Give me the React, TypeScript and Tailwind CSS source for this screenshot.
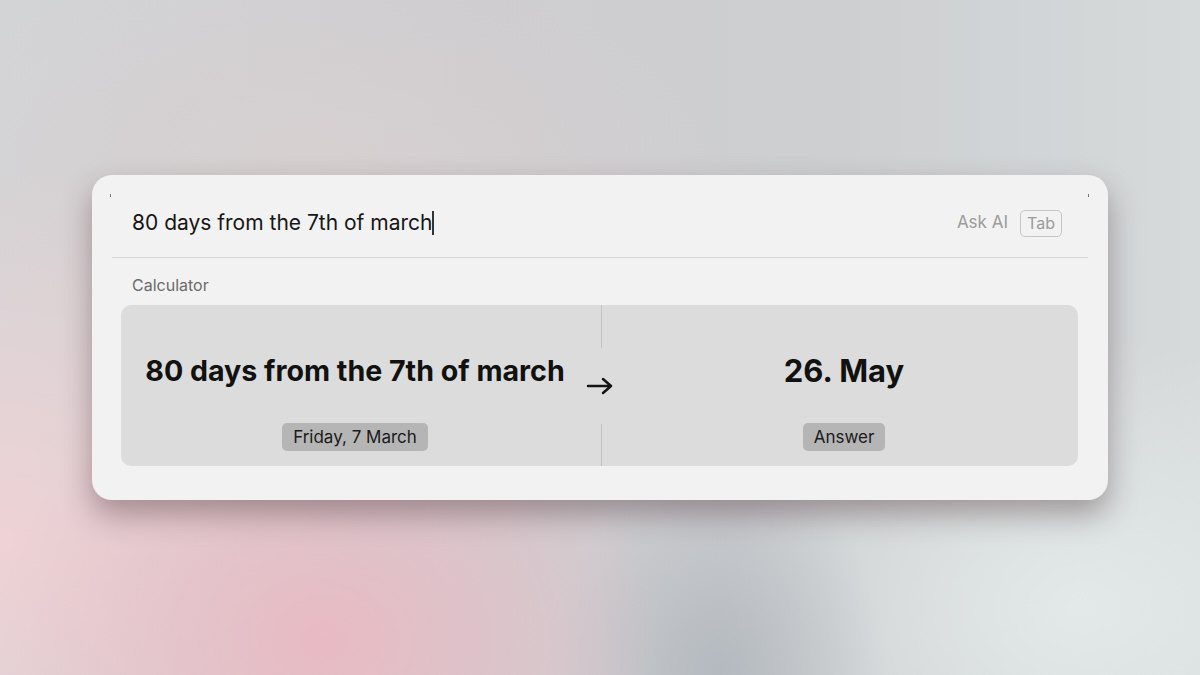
import React from 'react';

function Badge({ children }: { children: React.ReactNode }) {
  return (
    <span className="rounded-[5px] bg-[#b5b5b5] px-[11px] h-[28px] flex items-center text-[17px] leading-none text-[#1a1a1a]">
      {children}
    </span>
  );
}

export default function App() {
  return (
    <main
      className="w-[1200px] h-[675px] flex items-center justify-center overflow-hidden font-['Inter',_'Liberation_Sans',_sans-serif] bg-[#d0d0d2] bg-[radial-gradient(ellipse_28%_42%_at_27%_95%,_rgba(233,186,195,1),_transparent),radial-gradient(ellipse_30%_55%_at_0%_80%,_rgba(240,210,213,0.95),_transparent),radial-gradient(ellipse_14%_32%_at_60%_100%,_rgba(178,184,190,0.95),_transparent),radial-gradient(ellipse_30%_40%_at_90%_90%,_rgba(228,234,233,0.95),_transparent),radial-gradient(ellipse_35%_30%_at_25%_25%,_rgba(216,208,208,0.8),_transparent),linear-gradient(90deg,_#d3d4d6,_#cfcdd0_40%,_#cdcfd1_70%,_#d6dadb)]"
    >
      <div className="relative w-[1016px] rounded-[20px] bg-[#f2f2f2] shadow-[0_14px_30px_rgba(60,35,40,0.38)] flex flex-col">
        <span className="absolute left-[18px] top-[19px] w-px h-[3px] bg-[#777]" />
        <span className="absolute right-[19px] top-[19px] w-px h-[3px] bg-[#777]" />

        <div className="flex items-center pt-[32px] pb-[18px] pl-[40px] pr-[46px]">
          <div className="flex-1 flex items-center h-8 text-[21px] text-[#161616]">
            <span>80 days from the 7th of march</span>
            <span className="w-[2px] h-[24px] bg-[#333]" />
          </div>
          <span className="text-[17px] text-[#9b9b9b]">Ask AI</span>
          <span className="ml-3 h-[27px] w-[42px] flex items-center justify-center rounded-[5px] border border-[#c6c6c6] text-[16px] text-[#9b9b9b]">
            Tab
          </span>
        </div>

        <div className="mx-5 h-px bg-[#d6d6d6]" />

        <div className="pt-[17px] pl-[40px] h-[37px] text-[16px] leading-5 text-[#6b6b6b]">
          Calculator
        </div>

        <div className="mt-[10px] mb-[34px] ml-[29px] mr-[30px] h-[161px] rounded-[10px] bg-[#dcdcdc] flex">
          <div className="flex-1 flex flex-col items-center pt-[49px] pr-[12px]">
            <div className="text-[28.6px] leading-[34px] font-bold text-[#111]">80 days from the 7th of march</div>
            <div className="mt-[35px]">
              <Badge>Friday, 7 March</Badge>
            </div>
          </div>

          <div className="w-px flex flex-col items-center">
            <div className="flex-1 w-px bg-[#c3c3c3]" />
            <div className="h-[76px] flex items-center pt-[1px] pr-[3px]">
              <svg width="28" height="20" viewBox="0 0 28 20" fill="none" stroke="#141414" strokeWidth="2.5" strokeLinecap="round" strokeLinejoin="round">
                <path d="M2 10h23M17 3l8 7-8 7" />
              </svg>
            </div>
            <div className="flex-1 w-px bg-[#c3c3c3]" />
          </div>

          <div className="flex-1 flex flex-col items-center pt-[47px] pl-[8px]">
            <div className="text-[31px] leading-[38px] font-bold text-[#111]">26. May</div>
            <div className="mt-[33px]">
              <Badge>Answer</Badge>
            </div>
          </div>
        </div>
      </div>
    </main>
  );
}
